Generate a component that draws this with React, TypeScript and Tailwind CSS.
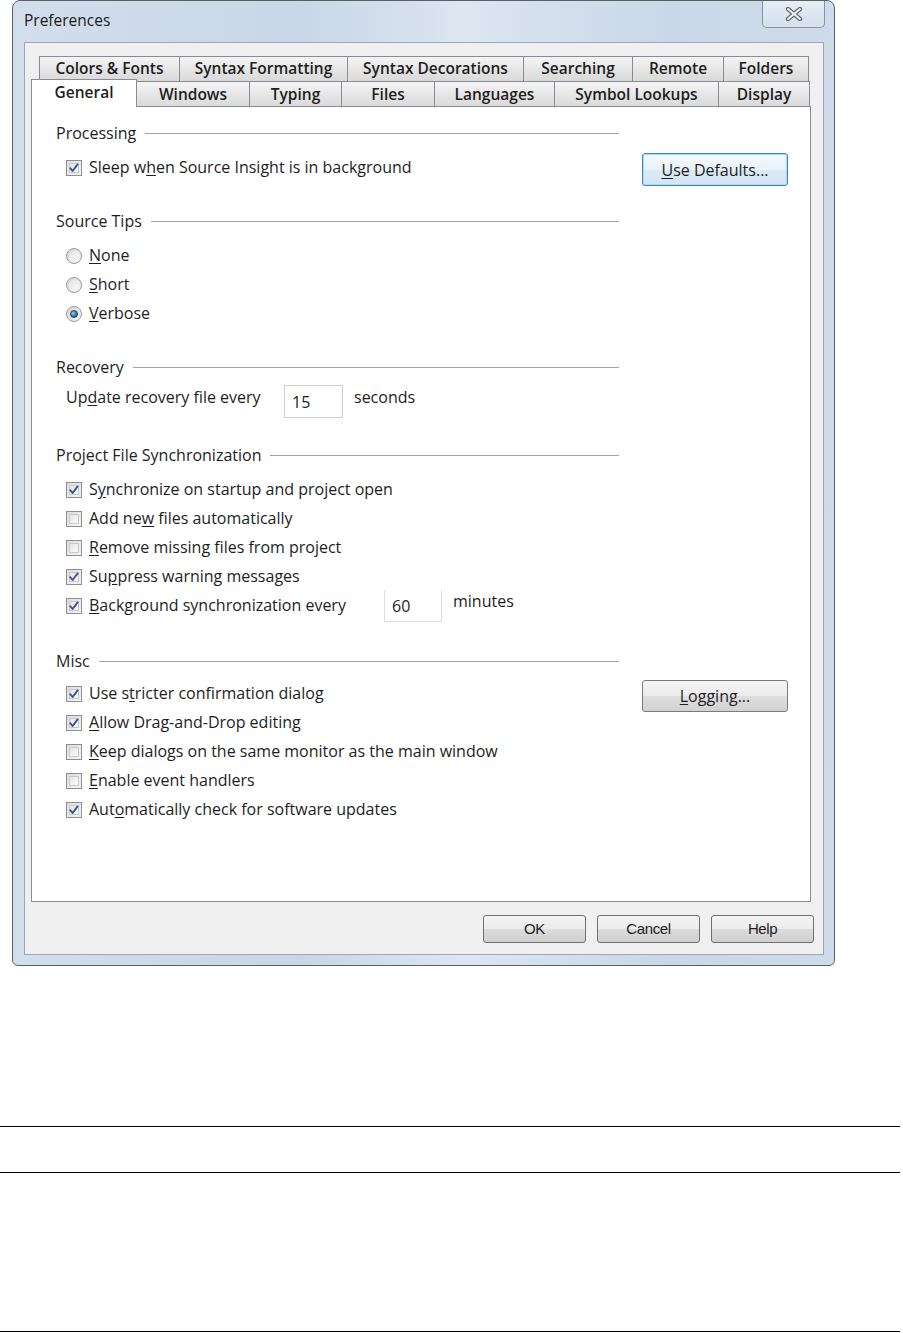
import type { ReactNode } from "react";

type TabDef = { label: string; width: number };

const topTabs: TabDef[] = [
  { label: "Colors & Fonts", width: 141 },
  { label: "Syntax Formatting", width: 169 },
  { label: "Syntax Decorations", width: 177 },
  { label: "Searching", width: 110 },
  { label: "Remote", width: 92 },
  { label: "Folders", width: 86 },
];

const bottomTabs: TabDef[] = [
  { label: "General", width: 106 },
  { label: "Windows", width: 114 },
  { label: "Typing", width: 93 },
  { label: "Files", width: 94 },
  { label: "Languages", width: 121 },
  { label: "Symbol Lookups", width: 165 },
  { label: "Display", width: 92 },
];

// "&" marks the mnemonic letter, like a win32 resource string
function Mnemonic({ text }: { text: string }) {
  const idx = text.indexOf("&");
  if (idx < 0) return <>{text}</>;
  return (
    <>
      {text.slice(0, idx)}
      <span className="underline underline-offset-2">{text[idx + 1]}</span>
      {text.slice(idx + 2)}
    </>
  );
}

function CheckBox({ checked }: { checked: boolean }) {
  return (
    <span className="flex h-[16px] w-[16px] shrink-0 items-center justify-center border border-[#8e8f8f] bg-[linear-gradient(135deg,#dcdcdc,#f6f6f6)] p-[2px]">
      <span className="flex h-full w-full items-center justify-center border border-[#c9c9c9] bg-[linear-gradient(135deg,#e4e4e4,#fbfbfb)]">
        {checked ? (
          <svg width="12" height="12" viewBox="0 0 12 12" className="shrink-0">
            <path d="M2.2 6.2 L4.6 9 L9.6 2.4" fill="none" stroke="#3d5291" strokeWidth="1.9" strokeLinecap="round" strokeLinejoin="round" />
          </svg>
        ) : null}
      </span>
    </span>
  );
}

function Radio({ checked }: { checked: boolean }) {
  return (
    <span className="flex h-[16px] w-[16px] shrink-0 items-center justify-center rounded-full border border-[#9a9a9a] bg-[linear-gradient(135deg,#d6d6d6,#f7f7f7)]">
      {checked ? (
        <span className="h-[8px] w-[8px] rounded-full border border-[#1a3e6b] bg-[radial-gradient(circle_at_35%_35%,#8fd0f5,#2a74b8_60%,#17457a)]" />
      ) : (
        <span className="h-[10px] w-[10px] rounded-full bg-[linear-gradient(135deg,#e2e2e2,#fafafa)]" />
      )}
    </span>
  );
}

function Option({ kind, checked, label }: { kind: "check" | "radio"; checked: boolean; label: string }) {
  return (
    <div className="flex h-[29px] items-center gap-[7px]">
      {kind === "check" ? <CheckBox checked={checked} /> : <Radio checked={checked} />}
      <span className="leading-[29px] whitespace-nowrap">
        <Mnemonic text={label} />
      </span>
    </div>
  );
}

function GroupHeader({ title, className }: { title: string; className?: string }) {
  return (
    <div className={`flex h-[20px] w-[563px] items-center ${className ?? ""}`}>
      <span className="whitespace-nowrap leading-[20px]">{title}</span>
      <span className="ml-[9px] h-px flex-1 bg-[#a3a3a3]" />
    </div>
  );
}

function SideButton({ label, focused, className }: { label: string; focused?: boolean; className?: string }) {
  return (
    <button
      className={
        focused
          ? `flex w-[146px] shrink-0 items-center justify-center rounded-[3px] border border-[#3c8ac2] bg-[linear-gradient(180deg,#f5fafd,#e9f2f9_50%,#dceaf5_50%,#d3e5f3)] shadow-[inset_0_0_0_1px_#a9dbf6] ${className ?? ""}`
          : `flex w-[146px] shrink-0 items-center justify-center rounded-[3px] border border-[#7a7a7a] bg-[linear-gradient(180deg,#f4f4f4,#ececec_50%,#dedede_50%,#d2d2d2)] ${className ?? ""}`
      }
    >
      <span className="text-[16px] text-[#1e1e1e]">
        <Mnemonic text={label} />
      </span>
    </button>
  );
}

function DialogButton({ label }: { label: string }) {
  return (
    <button className="flex h-[28px] w-[103px] items-center justify-center rounded-[3px] border border-[#707070] bg-[linear-gradient(180deg,#f4f4f4,#ebebeb_50%,#dddddd_50%,#cfcfcf)] font-['Liberation_Sans',sans-serif] text-[15px] tracking-[-0.4px] text-[#1e1e1e]">
      {label}
    </button>
  );
}

function Tab({ tab, first, children }: { tab: TabDef; first: boolean; children?: ReactNode }) {
  return (
    <div
      className={`flex h-full items-center justify-center border border-b-0 border-[#898c95] bg-[linear-gradient(180deg,#f5f5f5,#e6e6e6_50%,#d9d9d9)] text-[15.5px] font-semibold text-[#1e1e1e] ${first ? "" : "-ml-px"}`}
      style={{ width: tab.width }}
    >
      {children ?? tab.label}
    </div>
  );
}

function CloseGlyph() {
  return (
    <svg width="20" height="14" viewBox="0 0 20 14">
      <path d="M4 2 L16 12 M16 2 L4 12" stroke="#646b78" strokeWidth="4.4" strokeLinecap="round" />
      <path d="M4 2 L16 12 M16 2 L4 12" stroke="#f4f6f9" strokeWidth="1.8" strokeLinecap="round" />
    </svg>
  );
}

export default function App() {
  return (
    <div className="h-[1333px] w-[903px] overflow-hidden bg-white font-['Open_Sans','Noto_Sans',sans-serif] text-[16px] text-[#1e1e1e]">
      <div className="ml-[12px] flex h-[966px] w-[823px] flex-col rounded-t-[8px] rounded-b-[6px] border border-[#5b5f66] bg-[linear-gradient(90deg,#d3deec,#c8d6e7_35%,#dde6f1_55%,#c9d7e8_80%,#cfdbea)]">
        {/* title bar */}
        <div className="flex h-[41px] shrink-0 items-start justify-between">
          <span className="ml-[11px] mt-[9px] text-[15.5px] leading-[20px] text-[#1b1b1b]">Preferences</span>
          <div className="mr-[9px] flex h-[27px] w-[63px] items-center justify-center rounded-b-[5px] border border-t-0 border-[#8794a6] bg-[linear-gradient(180deg,#e6edf5,#d5e0ec)]">
            <CloseGlyph />
          </div>
        </div>

        {/* client area */}
        <div className="ml-[11px] flex h-[913px] w-[800px] flex-col border border-[#9aa8ba] bg-[#f0f0f0]">
          <div className="mt-[13px] flex h-[25px] pl-[14px]">
            {topTabs.map((pTab, i) => (
              <Tab key={pTab.label} tab={pTab} first={i === 0} />
            ))}
          </div>
          <div className="flex h-[26px] pl-[6px]">
            {bottomTabs.map((pTab, i) =>
              i === 0 ? (
                <div
                  key={pTab.label}
                  className="relative z-10 -mt-[2px] flex h-[28px] items-start justify-center border border-b-0 border-[#898c95] bg-white pt-[2px] text-[15.5px] font-semibold leading-[20px]"
                  style={{ width: pTab.width }}
                >
                  {pTab.label}
                </div>
              ) : (
                <Tab key={pTab.label} tab={pTab} first={false} />
              )
            )}
          </div>

          {/* page */}
          <div className="-mt-px ml-[6px] h-[796px] w-[780px] border border-[#898c95] bg-white pl-[24px] pt-[16px]">
            <GroupHeader title="Processing" />
            <div className="mt-[10px] pl-[10px]">
              <div className="flex h-[29px] items-start">
                <div className="w-[553px] shrink-0">
                  <Option kind="check" checked label="Sleep w&hen Source Insight is in background" />
                </div>
                <SideButton label="&Use Defaults..." focused className="ml-[23px] h-[33px]" />
              </div>
            </div>

            <GroupHeader title="Source Tips" className="mt-[29px]" />
            <div className="mt-[10px] pl-[10px]">
              <Option kind="radio" checked={false} label="&None" />
              <Option kind="radio" checked={false} label="&Short" />
              <Option kind="radio" checked label="&Verbose" />
            </div>

            <GroupHeader title="Recovery" className="mt-[29px]" />
            <div className="mt-[6px] flex h-[29px] items-start pl-[10px]">
              <span className="w-[218px] whitespace-nowrap leading-[29px]">
                <Mnemonic text="Up&date recovery file every" />
              </span>
              <div className="mt-[2px] flex h-[33px] w-[59px] shrink-0 items-center border border-[#d0d0d0] pl-[7px]">15</div>
              <span className="ml-[11px] leading-[29px]">seconds</span>
            </div>

            <GroupHeader title="Project File Synchronization" className="mt-[33px]" />
            <div className="mt-[10px] pl-[10px]">
              <Option kind="check" checked label="S&ynchronize on startup and project open" />
              <Option kind="check" checked={false} label="Add ne&w files automatically" />
              <Option kind="check" checked={false} label="&Remove missing files from project" />
              <Option kind="check" checked label="Su&ppress warning messages" />
              <div className="flex h-[29px] items-start">
                <div className="w-[318px] shrink-0">
                  <Option kind="check" checked label="&Background synchronization every" />
                </div>
                <div className="-mt-px flex h-[32px] w-[58px] shrink-0 items-center border border-t-0 border-[#dcdcdc] pl-[7px]">60</div>
                <span className="ml-[11px] leading-[20px]">minutes</span>
              </div>
            </div>

            <GroupHeader title="Misc" className="mt-[31px]" />
            <div className="mt-[8px] pl-[10px]">
              <div className="flex h-[29px] items-start">
                <div className="w-[553px] shrink-0">
                  <Option kind="check" checked label="Use s&tricter confirmation dialog" />
                </div>
                <SideButton label="&Logging..." className="ml-[23px] mt-[1px] h-[32px]" />
              </div>
              <Option kind="check" checked label="&Allow Drag-and-Drop editing" />
              <Option kind="check" checked={false} label="&Keep dialogs on the same monitor as the main window" />
              <Option kind="check" checked={false} label="&Enable event handlers" />
              <Option kind="check" checked label="Aut&omatically check for software updates" />
            </div>
          </div>

          <div className="mt-[13px] flex justify-end gap-[11px] pr-[9px]">
            <DialogButton label="OK" />
            <DialogButton label="Cancel" />
            <DialogButton label="Help" />
          </div>
        </div>
      </div>

      <div className="mt-[160px] h-px w-[900px] bg-black" />
      <div className="mt-[45px] h-px w-[900px] bg-black" />
      <div className="mt-[158px] h-px w-[900px] bg-black" />
    </div>
  );
}
